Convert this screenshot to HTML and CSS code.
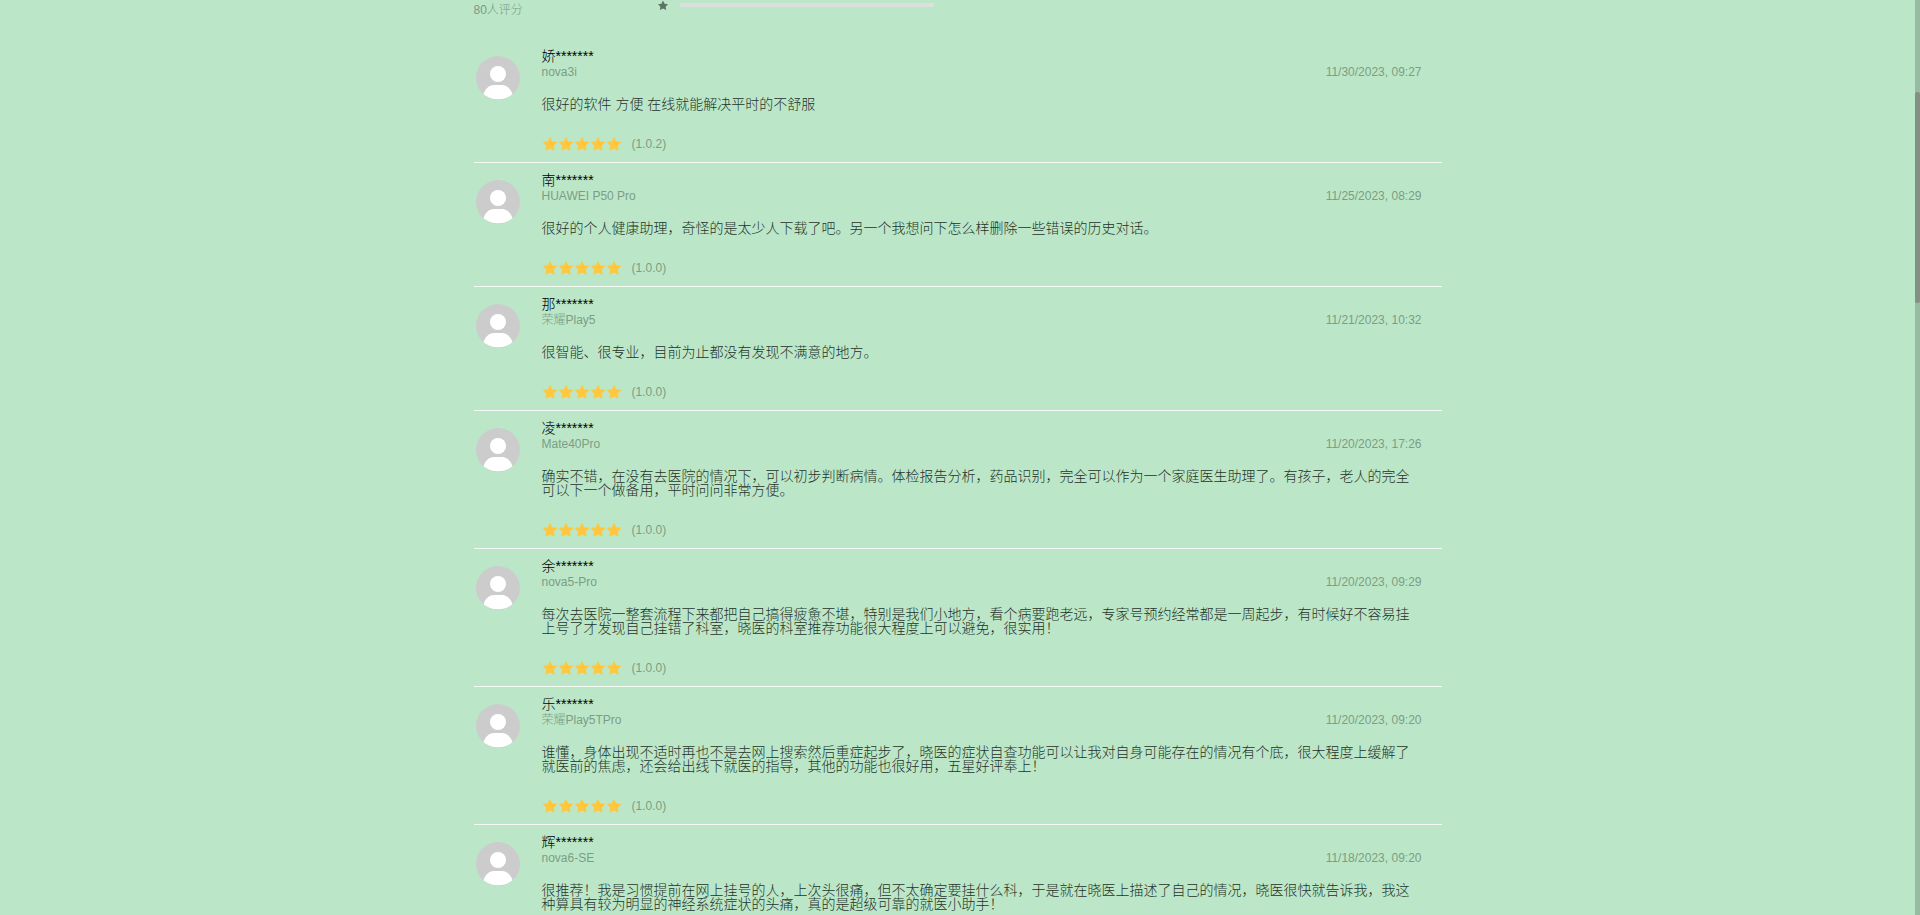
FILE: index.html
```html
<!DOCTYPE html>
<html lang="zh-CN">
<head>
    <meta charset="utf-8" />
    <meta name="viewport" content="width=device-width, initial-scale=1" />
    <title>用户评论</title>
    <link rel="stylesheet" href="styles.css">
</head>
<body>
<svg class="sprite" aria-hidden="true">
    <symbol id="star" viewBox="0 0 16 16">
        <path d="M8 .8l2.300 4.500 5 .8-3.500 3.600.8 5L8 12.500l-4.600 2.200.8-5L.7 6.100l5-.8z"/>
    </symbol>
    <symbol id="user" viewBox="0 0 44 44">
        <circle cx="22" cy="22" r="22" fill="#ccc"/>
        <circle cx="22" cy="18" r="8" fill="#fff"/>
        <path d="M7.500 38.300C9 33 13 29 18 29h8c5 0 9 4 10.500 9.300A22 22 0 0 1 22 43.300 22 22 0 0 1 7.500 38.300z" fill="#fff"/>
    </symbol>
</svg>
<main class="page">
    <header class="summary">
        <span class="total">80人评分</span>
        <svg class="level"><use href="#star"/></svg>
        <div class="bar"></div>
    </header>
    <ul class="list">
        <li class="item">
            <svg class="avatar"><use href="#user"/></svg>
            <div class="content">
                <div class="name">娇*******</div>
                <div class="info"><span>nova3i</span><time>11/30/2023, 09:27</time></div>
                <p class="text">很好的软件 方便 在线就能解决平时的不舒服</p>
                <div class="rate">
                    <svg><use href="#star"/></svg><svg><use href="#star"/></svg><svg><use href="#star"/></svg><svg><use href="#star"/></svg><svg><use href="#star"/></svg>
                    <span class="version">(1.0.2)</span>
                </div>
            </div>
        </li>
        <li class="item">
            <svg class="avatar"><use href="#user"/></svg>
            <div class="content">
                <div class="name">南*******</div>
                <div class="info"><span>HUAWEI P50 Pro</span><time>11/25/2023, 08:29</time></div>
                <p class="text">很好的个人健康助理，奇怪的是太少人下载了吧。另一个我想问下怎么样删除一些错误的历史对话。</p>
                <div class="rate">
                    <svg><use href="#star"/></svg><svg><use href="#star"/></svg><svg><use href="#star"/></svg><svg><use href="#star"/></svg><svg><use href="#star"/></svg>
                    <span class="version">(1.0.0)</span>
                </div>
            </div>
        </li>
        <li class="item">
            <svg class="avatar"><use href="#user"/></svg>
            <div class="content">
                <div class="name">那*******</div>
                <div class="info"><span>荣耀Play5</span><time>11/21/2023, 10:32</time></div>
                <p class="text">很智能、很专业，目前为止都没有发现不满意的地方。</p>
                <div class="rate">
                    <svg><use href="#star"/></svg><svg><use href="#star"/></svg><svg><use href="#star"/></svg><svg><use href="#star"/></svg><svg><use href="#star"/></svg>
                    <span class="version">(1.0.0)</span>
                </div>
            </div>
        </li>
        <li class="item">
            <svg class="avatar"><use href="#user"/></svg>
            <div class="content">
                <div class="name">凌*******</div>
                <div class="info"><span>Mate40Pro</span><time>11/20/2023, 17:26</time></div>
                <p class="text">确实不错，在没有去医院的情况下，可以初步判断病情。体检报告分析，药品识别，完全可以作为一个家庭医生助理了。有孩子，老人的完全可以下一个做备用，平时问问非常方便。</p>
                <div class="rate">
                    <svg><use href="#star"/></svg><svg><use href="#star"/></svg><svg><use href="#star"/></svg><svg><use href="#star"/></svg><svg><use href="#star"/></svg>
                    <span class="version">(1.0.0)</span>
                </div>
            </div>
        </li>
        <li class="item">
            <svg class="avatar"><use href="#user"/></svg>
            <div class="content">
                <div class="name">余*******</div>
                <div class="info"><span>nova5-Pro</span><time>11/20/2023, 09:29</time></div>
                <p class="text">每次去医院一整套流程下来都把自己搞得疲惫不堪，特别是我们小地方，看个病要跑老远，专家号预约经常都是一周起步，有时候好不容易挂上号了才发现自己挂错了科室，晓医的科室推荐功能很大程度上可以避免，很实用！</p>
                <div class="rate">
                    <svg><use href="#star"/></svg><svg><use href="#star"/></svg><svg><use href="#star"/></svg><svg><use href="#star"/></svg><svg><use href="#star"/></svg>
                    <span class="version">(1.0.0)</span>
                </div>
            </div>
        </li>
        <li class="item">
            <svg class="avatar"><use href="#user"/></svg>
            <div class="content">
                <div class="name">乐*******</div>
                <div class="info"><span>荣耀Play5TPro</span><time>11/20/2023, 09:20</time></div>
                <p class="text">谁懂，身体出现不适时再也不是去网上搜索然后重症起步了，晓医的症状自查功能可以让我对自身可能存在的情况有个底，很大程度上缓解了就医前的焦虑，还会给出线下就医的指导，其他的功能也很好用，五星好评奉上！</p>
                <div class="rate">
                    <svg><use href="#star"/></svg><svg><use href="#star"/></svg><svg><use href="#star"/></svg><svg><use href="#star"/></svg><svg><use href="#star"/></svg>
                    <span class="version">(1.0.0)</span>
                </div>
            </div>
        </li>
        <li class="item">
            <svg class="avatar"><use href="#user"/></svg>
            <div class="content">
                <div class="name">辉*******</div>
                <div class="info"><span>nova6-SE</span><time>11/18/2023, 09:20</time></div>
                <p class="text">很推荐！我是习惯提前在网上挂号的人，上次头很痛，但不太确定要挂什么科，于是就在晓医上描述了自己的情况，晓医很快就告诉我，我这种算具有较为明显的神经系统症状的头痛，真的是超级可靠的就医小助手！</p>
            </div>
        </li>
    </ul>
</main>
<div class="scrollbar"><div class="thumb"></div></div>
</body>
</html>
```

FILE: styles.css
```css
* {
    box-sizing: border-box;
}
body {
    display: flex;
    height: 100vh;
    margin: 0;
    overflow: hidden;
    background-color: #bbe7c8;
    color: #000;
    font-family: "Liberation Sans", "Noto Sans CJK SC", sans-serif;
    font-size: 14px;
    font-weight: 300;
}
svg {
    display: block;
    flex: none;
}
.sprite {
    display: none;
}
.page {
    flex: 1;
    max-width: 968px;
    margin: 0 auto;
}
.summary {
    display: flex;
    align-items: flex-start;
    height: 39px;
    font-size: 12px;
    line-height: 20px;
}
.total {
    width: 182px;
    color: #789a82;
}
.level {
    width: 14px;
    height: 11px;
    fill: #5d7364;
}
.bar {
    width: 254px;
    height: 4px;
    margin: 3px 0 0 10px;
    border-radius: 2px;
    background-color: #dddfdd;
}
.list {
    margin: 0;
    padding: 0;
    list-style: none;
}
.item {
    display: flex;
    gap: 22px;
    padding: 9px 20px 9px 2px;
    border-bottom: 1px solid #f3faf5;
}
.avatar {
    width: 44px;
    height: 44px;
    margin-top: 8px;
}
.content {
    flex: 1;
}
.name {
    line-height: 16px;
}
.info {
    display: flex;
    justify-content: space-between;
    font-size: 12px;
    line-height: 16px;
    color: #7b9d85;
}
.text {
    margin: 17px 0 24px;
    line-height: 14px;
    color: #25332a;
}
.rate {
    display: flex;
    align-items: center;
    height: 18px;
}
.rate svg {
    width: 16px;
    height: 16px;
    fill: #ffc640;
}
.version {
    margin-left: 10px;
    font-size: 12px;
    color: #7b9d85;
}
.scrollbar {
    width: 5px;
    padding-top: 92px;
    background-color: #98b9a2;
}
.thumb {
    height: 211px;
    border-radius: 2px;
    background-color: #849084;
}
```
